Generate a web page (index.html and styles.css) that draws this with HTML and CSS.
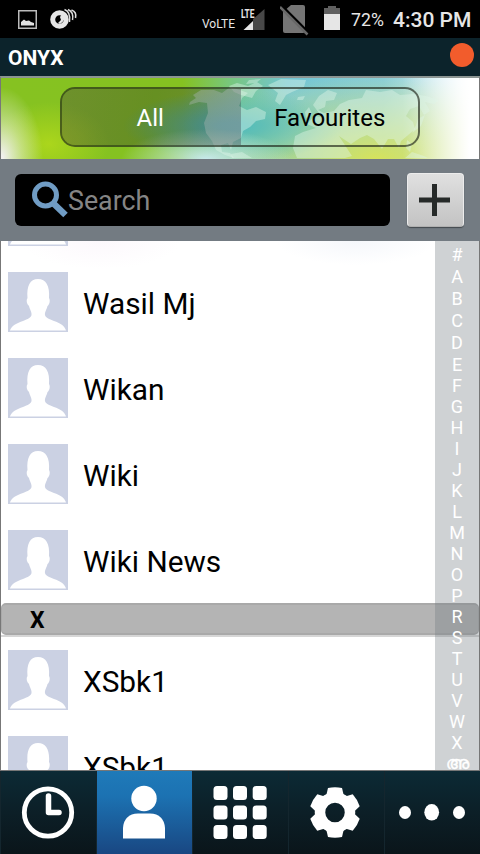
FILE: index.html
```html
<!DOCTYPE html>
<html lang="en">
<head>
<meta charset="utf-8">
<title>ONYX</title>
<link rel="stylesheet" href="styles.css">
</head>
<body>
<svg class="defs" width="0" height="0">
  <symbol id="person" viewBox="0 0 60 60">
    <rect width="60" height="60" fill="#cbd1e3"/>
    <path d="M2 58.500C3 54 9 51 15 49C20 47 23 45.500 23.500 43C24 40 22 38 21 34C18.500 32 18 28 19.500 26C18.500 14 22 7 30 7C38 7 42 14 41 26C42.500 28 41.500 33 39.500 34C38.500 38 36.500 40 37 43C37.500 45.500 41 47 46 49C52 51 57 54 58 58.500Z" fill="#fff"/>
  </symbol>
</svg>
<div class="app">
  <div class="status">
    <svg class="s-img" width="19" height="19" viewBox="0 0 19 19"><rect x=".75" y=".75" width="17.500" height="17.500" fill="none" stroke="#bbb" stroke-width="1.500"/><path d="M3 15.500V12L6 9.500L8 11L11 10.500L13 12L16 13V15.500Z" fill="#e2e2e2"/></svg>
    <svg class="s-rec" width="28" height="22" viewBox="0 0 28 22"><circle cx="9.500" cy="11.500" r="6.800" fill="none" stroke="#e6e6e6" stroke-width="5"/><path d="M12 6L16 9L12.500 14L10 16L8 15L11 12L10 9Z" fill="#e6e6e6"/><path d="M14.500 1.500Q21 4 19.500 14M18 1.500Q24 4 22.500 12M21.500 2Q27 4 25.500 10" fill="none" stroke="#ddd" stroke-width="1.500"/></svg>
    <span class="volte">VoLTE</span>
    <svg class="s-sig" width="24" height="24" viewBox="0 0 24 24"><path d="M23.500 2V23H12V12Z" fill="#484848"/><path d="M2.500 23L12 14V23Z" fill="#e6e6e6"/><text class="lte" x="0" y="10.500" textLength="13.500" lengthAdjust="spacingAndGlyphs">LTE</text></svg>
    <svg class="s-sim" width="30" height="32" viewBox="0 0 30 32"><path d="M11 1H23Q25 1 25 3V27Q25 29 23 29H5Q3 29 3 27V8Z" fill="#757575"/><path d="M1 1L30 30" stroke="#000" stroke-width="2.500"/><path d="M0 3L27.500 30.500" stroke="#686868" stroke-width="2.500"/></svg>
    <svg class="s-bat" width="16" height="24" viewBox="0 0 16 24"><path d="M4 0H12V2H16V8H0V2H4Z" fill="#606060"/><path d="M0 8H16V24H0Z" fill="#e6e6e6"/></svg>
    <span class="pct">72%</span>
    <span class="time">4:30 PM</span>
  </div>
  <div class="title"><span>ONYX</span><i class="dot"></i></div>
  <div class="banner">
    <svg class="map" width="478" height="81" viewBox="1 0 478 81">
      <g fill="#e1f6e9" fill-opacity=".42">
        <path d="M190 24L196 20L193 17L201 12L214 12L222 15L230 9L240 12L248 15L242 20L239 28L247 32L256 29L266 34L265 41L256 43L250 49L243 53L241 60L233 64L231 72L228 65L221 67L222 74L230 75L234 80L225 77L216 72L212 63L206 55L204 45L208 35L207 25L199 24L189 27Z"/>
        <path d="M229 8L237 5L248 8L257 4L263 8L256 13L252 20L241 17L234 14ZM249 2L261 1L256 5L246 6Z"/>
        <path d="M268 7L281 1L306 2L304 9L292 14L286 17L280 27L275 23L278 15Z"/>
        <path d="M305 34L309 29L312 36L306 40ZM298 19L305 18L303 22L297 22Z"/>
        <path d="M313 27L319 18L328 12L337 15L334 22L326 23L325 29L318 32L324 35L334 33L340 26L349 22L362 20L366 12L380 14L392 12L400 17L413 16L426 18L439 22L434 26L425 24L430 33L424 37L419 28L410 31L406 38L413 44L415 51L407 58L401 63L399 70L394 61L388 61L382 71L374 61L367 57L360 60L351 66L339 58L352 78L345 80H297L293 70L295 58L303 54L316 50L307 46L314 38L322 39Z"/>
        <path d="M418 41L425 37L421 48L412 55L416 47ZM407 62L412 66L410 74L406 70ZM412 74L424 78L428 80H405ZM231 76L242 74L252 80H232Z"/>
      </g>
    </svg>
    <div class="tabs"><div class="tab on">All</div><div class="tab">Favourites</div></div>
  </div>
  <div class="searchbar">
    <div class="field">
      <svg width="36" height="38" viewBox="0 0 36 38"><circle cx="13.500" cy="14" r="11" fill="none" stroke="#709cc4" stroke-width="5"/><path d="M21 22L33.500 34" stroke="#709cc4" stroke-width="6.500"/></svg>
      <span>Search</span>
    </div>
    <div class="add"><svg width="32" height="32" viewBox="0 0 32 32"><path d="M15.500 0V32M0 16H31" stroke="#262a29" stroke-width="5"/></svg></div>
  </div>
  <div class="body">
    <div class="list">
      <div class="row"><svg><use href="#person"/></svg></div>
      <div class="row"><svg><use href="#person"/></svg><span>Wasil Mj</span></div>
      <div class="row"><svg><use href="#person"/></svg><span>Wikan</span></div>
      <div class="row"><svg><use href="#person"/></svg><span>Wiki</span></div>
      <div class="row"><svg><use href="#person"/></svg><span>Wiki News</span></div>
      <div class="section"><b>X</b></div>
      <div class="row"><svg><use href="#person"/></svg><span>XSbk1</span></div>
      <div class="row"><svg><use href="#person"/></svg><span>XSbk1</span></div>
    </div>
    <div class="index">
      <span>#</span><span>A</span><span>B</span><span>C</span><span>D</span><span>E</span><span>F</span><span>G</span><span>H</span><span>I</span><span>J</span><span>K</span><span>L</span><span>M</span><span>N</span><span>O</span><span>P</span><span>R</span><span>S</span><span>T</span><span>U</span><span>V</span><span>W</span><span>X</span><span class="ml">അ</span>
    </div>
  </div>
  <div class="nav">
    <div class="item"><svg width="96" height="83" viewBox="0 0 96 83"><circle cx="48" cy="41.500" r="23.700" fill="none" stroke="#fff" stroke-width="4.800"/><path d="M48.500 25V41.500H59" fill="none" stroke="#fff" stroke-width="5.500" stroke-linecap="round" stroke-linejoin="round"/></svg></div>
    <div class="item active"><svg width="96" height="83" viewBox="0 0 96 83"><circle cx="48" cy="27.500" r="12.700" fill="#fff"/><path d="M27 67.500V57Q28 43 42 42.500H54Q68 43 69 57V67.500Z" fill="#fff"/></svg></div>
    <div class="item"><svg width="96" height="83" viewBox="0 0 96 83" fill="#fff"><rect x="21.500" y="15" width="14" height="14" rx="3.500"/><rect x="41" y="15" width="14" height="14" rx="3.500"/><rect x="60.700" y="15" width="14" height="14" rx="3.500"/><rect x="21.500" y="34.500" width="14" height="14" rx="3.500"/><rect x="41" y="34.500" width="14" height="14" rx="3.500"/><rect x="60.700" y="34.500" width="14" height="14" rx="3.500"/><rect x="21.500" y="54" width="14" height="14" rx="3.500"/><rect x="41" y="54" width="14" height="14" rx="3.500"/><rect x="60.700" y="54" width="14" height="14" rx="3.500"/></svg></div>
    <div class="item"><svg width="96" height="83" viewBox="0 0 96 83"><g transform="translate(47 41.500)"><circle r="15" fill="none" stroke="#fff" stroke-width="10.500"/><g fill="#fff"><path id="tooth" d="M-9 -16L-7 -24.500Q0 -26 7 -24.500L9 -16Z"/><use href="#tooth" transform="rotate(60)"/><use href="#tooth" transform="rotate(120)"/><use href="#tooth" transform="rotate(180)"/><use href="#tooth" transform="rotate(240)"/><use href="#tooth" transform="rotate(300)"/></g></g></svg></div>
    <div class="item"><svg width="96" height="83" viewBox="0 0 96 83" fill="#fff"><ellipse cx="21" cy="41.500" rx="6" ry="6.500"/><ellipse cx="47.700" cy="41.300" rx="7.400" ry="8.300"/><ellipse cx="75" cy="41.500" rx="6" ry="6.500"/></svg></div>
  </div>
</div>
</body>
</html>
```
FILE: styles.css
```css
* { box-sizing: border-box; }
body { margin: 0; font-family: Roboto, "Noto Sans", sans-serif; background: #000; }
svg { display: block; flex: none; }
.defs { position: absolute; }
.app { width: 480px; height: 854px; display: flex; flex-direction: column; overflow: hidden; }

.status { height: 38px; flex: none; background: #000; display: flex; align-items: flex-start; color: #e6e6e6; padding-left: 18px; white-space: nowrap; }
.s-img { margin-top: 10px; }
.s-rec { margin: 8px 0 0 13px; }
.volte { width: 33px; margin: 16px 0 0 124px; font-size: 12px; line-height: 16px; }
.s-sig { margin: 7px 0 0 6px; }
.lte { font: bold 13px Roboto, sans-serif; fill: #e6e6e6; }
.s-sim { margin: 4px 0 0 15px; }
.s-bat { margin: 6px 0 0 14px; }
.pct { width: 33px; margin: 10px 0 0 11px; font-size: 17.700px; line-height: 21px; }
.time { margin: 7px 0 0 9px; font-size: 21px; line-height: 26px; font-weight: 500; }

.title { height: 38px; flex: none; background: #0c232b; display: flex; justify-content: space-between; align-items: flex-start; padding: 5px 6px 0 8px; color: #fff; font-size: 21px; line-height: 30px; font-weight: 700; }
.dot { width: 24px; height: 24px; border-radius: 50%; background: #f25c2c; }

.banner { height: 83px; flex: none; position: relative; border-top: 2px solid #8b9492; border-left: 1px solid #777; border-right: 1px solid #777; padding: 9px 59px;
  background:
    radial-gradient(ellipse 42px 72px at 0 100%, #f1f0ee 5%, rgba(240,243,225,.5) 50%, rgba(225,240,200,0) 100%),
    radial-gradient(ellipse 60px 42px at 48px 66px, #abd61c, rgba(169,213,38,0)),
    radial-gradient(ellipse 85px 30px at 205px 100%, #c7e9ec, rgba(199,233,236,0)),
    radial-gradient(ellipse 110px 36px at 232px 48px, #4ab8b8 10%, rgba(71,179,180,0)),
    linear-gradient(90deg, rgba(255,255,255,0) 84%, #fff 98%),
    radial-gradient(ellipse 190px 85px at 375px 100%, #d6e35c, rgba(220,235,140,0)),
    linear-gradient(90deg, #86c221 0, #85c221 38%, #78c77e 48%, #73c5d3 60%, #87cddd 80%, #d8eff5 95%, #fff 100%); }
.map { position: absolute; left: 0; top: 0; }
.tabs { position: relative; width: 360px; height: 60px; border: 2px solid rgba(30,35,25,.65); border-radius: 15px; display: flex; overflow: hidden; font-size: 24px; line-height: 58px; text-align: center; color: #000; background: rgba(255,255,255,.06); background-clip: padding-box; }
.tab { flex: 1; padding-left: 1px; }
.tab.on { padding: 0 2px 0 0; color: #fff; background: linear-gradient(100deg, rgba(45,35,40,.32), rgba(0,0,0,.27) 50%, rgba(45,30,50,.3)); }

.searchbar { height: 82px; flex: none; background: #737b82; padding: 14px 16px 0 15px; display: flex; justify-content: space-between; }
.field { width: 375px; height: 52px; margin-top: 1px; border-radius: 6px; background: #000; display: flex; align-items: center; padding-left: 17px; color: #858585; font-size: 26.800px; }
.field span { margin-top: 1px; }
.add { width: 57px; height: 54px; border-radius: 4px; background: linear-gradient(#e0e0e0, #c3c3c3); border: 1px solid #ececec; border-bottom-color: #b0b0b0; box-shadow: 0 1px 1px #444a4e; display: flex; align-items: center; padding-left: 11px; }

.body { height: 530px; flex: none; position: relative; overflow: hidden; border: 1px solid #777; border-top: 0; background: radial-gradient(ellipse 80px 28px at 100px 0, #fcf8fc, rgba(252,248,252,0)), radial-gradient(ellipse 80px 24px at 355px 0, #f5f7fb, rgba(245,247,251,0)), #fff; }
.list { margin-top: -68px; display: flex; flex-direction: column; }
.row { height: 86px; flex: none; padding: 13px 0 0 7px; display: flex; gap: 15px; font-size: 29.800px; line-height: 63px; color: #000; }
.row svg { width: 60px; height: 60px; }
.section { height: 34px; flex: none; padding-bottom: 2px; background: linear-gradient(#fff 32px, #d6d6d6 32px); }
.section b { display: block; height: 32px; background: #b4b4b4; border: 2px solid #a9a9a9; border-width: 2px 1px; border-radius: 5px; font-size: 23px; line-height: 31px; padding-left: 28px; }
.index { position: absolute; right: 0; top: 0; width: 44px; height: 529px; padding-top: 3px; background: rgba(115,123,130,.34); color: #fff; display: flex; flex-direction: column; align-items: center; font-size: 18px; }
.index span { height: 21px; line-height: 22px; flex: none; }
.index span:nth-child(-n+5) { height: 22px; }
.index .ml { height: 18px; font-size: 17px; line-height: 20px; -webkit-text-stroke: .5px #fff; }

.nav { height: 83px; flex: none; display: flex; background: linear-gradient(#0c2a35, #0c1f27 50%, #0a151a); }
.item { width: 96px; box-shadow: inset 1px 0 #14262e; }
.item.active { background: linear-gradient(#1f7ab9, #1c72b2 30%, #194782); }
```
